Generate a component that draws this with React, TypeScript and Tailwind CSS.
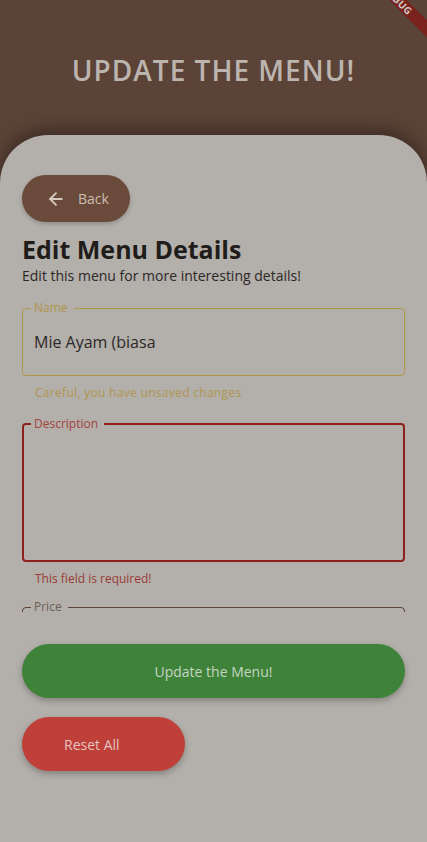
import { ArrowLeft } from 'lucide-react';

export default function App() {
  return (
    <div className="relative flex min-h-screen w-full flex-col overflow-hidden bg-[#5c4337] font-['Open_Sans',sans-serif]">
      {/* Debug ribbon */}
      <div className="absolute left-[338px] top-[-6px] z-10 flex h-3 w-[120px] rotate-45 items-center justify-center bg-[#7a221c]">
        <span className="text-[10px] font-bold leading-none tracking-wide text-[#cfc6c1]">DEBUG</span>
      </div>

      {/* Header */}
      <header className="flex h-[135px] items-center justify-center pt-[4px]">
        <h1 className="text-[28px] font-semibold tracking-[1px] text-[#bcb5af]">UPDATE THE MENU!</h1>
      </header>

      {/* Card */}
      <main className="flex flex-1 flex-col rounded-t-[48px] bg-[#b3afaa] px-[22px] pt-[40px] shadow-[0_-6px_18px_rgba(0,0,0,0.35)]">
        <button className="flex h-[47px] w-[108px] items-center gap-[12px] rounded-full bg-[#6a4a3a] pl-[24px] text-[14px] text-[#cbbdb3] shadow-[0_2px_4px_rgba(0,0,0,0.2)]">
          <ArrowLeft className="h-[20px] w-[20px] text-[#d6c9bf]" strokeWidth={2.2} />
          <span>Back</span>
        </button>

        <h2 className="mt-[12px] text-[25px] font-bold leading-[30px] text-[#1f1c1a]">Edit Menu Details</h2>
        <p className="mt-[2px] text-[14px] leading-[20px] text-[#2b2826]">Edit this menu for more interesting details!</p>

        {/* Scrollable form */}
        <div className="mt-[6px] h-[320px] overflow-hidden pt-[9px]">
          <fieldset className="rounded-[4px] border border-[#b0964a] px-[8px] pb-[21px]">
            <legend className="pl-[3px] pr-[6px] text-[12px] leading-[14px] text-[#b0964a]">Name</legend>
            <div className="ml-[3px] mt-[15px] text-[16px] leading-[24px] text-[#2b2927]">Mie Ayam (biasa</div>
          </fieldset>
          <p className="ml-[13px] mt-[9px] text-[12px] leading-[16px] tracking-[0.3px] text-[#b09650]">Careful, you have unsaved changes</p>

          <fieldset className="mt-[16px] h-[145px] rounded-[4px] border-2 border-[#8e1f1c] px-[7px]">
            <legend className="pl-[3px] pr-[6px] text-[12px] leading-[14px] text-[#a5433d]">Description</legend>
          </fieldset>
          <p className="ml-[13px] mt-[9px] text-[12px] leading-[16px] text-[#9a3b36]">This field is required!</p>

          <fieldset className="mt-[13px] h-[60px] rounded-[4px] border border-[#5a4236] px-[8px]">
            <legend className="pl-[3px] pr-[6px] text-[12px] leading-[14px] text-[#6b5e57]">Price</legend>
          </fieldset>
        </div>

        <button className="mt-[32px] h-[54px] w-full rounded-full bg-[#3f8239] text-[14px] text-[#c5d6c1] shadow-[0_3px_6px_rgba(0,0,0,0.25)]">
          Update the Menu!
        </button>
        <button className="mt-[19px] flex h-[54px] w-[163px] items-center rounded-full bg-[#bf3f39] pl-[42px] text-[14px] text-[#e3c4c0] shadow-[0_3px_6px_rgba(0,0,0,0.25)]">
          Reset All
        </button>
      </main>
    </div>
  );
}
